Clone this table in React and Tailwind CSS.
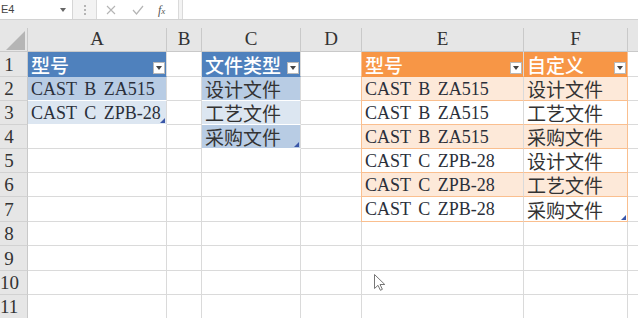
import React from 'react';

const CJK = "font-['Noto_Sans_CJK_SC','Noto_Sans',sans-serif]";
const SERIF = "font-['Liberation_Serif','Noto_Sans_CJK_SC',serif]";

// column widths include the right gridline
const COLS = [
  { key: 'A', w: 139 },
  { key: 'B', w: 35 },
  { key: 'C', w: 99 },
  { key: 'D', w: 61 },
  { key: 'E', w: 162 },
  { key: 'F', w: 104 },
  { key: 'G', w: 40 },
];

const ROW_H = [25, 24, 24, 24, 24, 24, 25, 24, 25, 24, 24];

// cell styles keyed by kind
const KIND = {
  blueHead: 'bg-[#4f81bd] text-white border-b-[#4f81bd]',
  blueDark: 'bg-[#b8cce4] border-b-white',
  blueLight: 'bg-[#dce6f1] border-b-white',
  orangeHead: 'bg-[#f79646] text-white border-b-[#f79646]',
  orangeBand: 'bg-[#fde9d9] border-b-[#fabf8f]',
  orangePlain: 'bg-white border-b-[#fabf8f]',
};

const ROWS = {
  1: {
    A: { t: '型号', k: 'blueHead', filter: true },
    C: { t: '文件类型', k: 'blueHead', filter: true },
    E: { t: '型号', k: 'orangeHead', filter: true, edgeL: true },
    F: { t: '自定义', k: 'orangeHead', filter: true, edgeR: true },
  },
  2: {
    A: { t: 'CAST B ZA515', k: 'blueDark' },
    C: { t: '设计文件', k: 'blueDark' },
    E: { t: 'CAST B ZA515', k: 'orangeBand', edgeL: true },
    F: { t: '设计文件', k: 'orangeBand', edgeR: true },
  },
  3: {
    A: { t: 'CAST C ZPB-28', k: 'blueLight', handle: true },
    C: { t: '工艺文件', k: 'blueLight' },
    E: { t: 'CAST B ZA515', k: 'orangePlain', edgeL: true },
    F: { t: '工艺文件', k: 'orangePlain', edgeR: true },
  },
  4: {
    C: { t: '采购文件', k: 'blueDark', handle: true },
    E: { t: 'CAST B ZA515', k: 'orangeBand', edgeL: true },
    F: { t: '采购文件', k: 'orangeBand', edgeR: true },
  },
  5: {
    E: { t: 'CAST C ZPB-28', k: 'orangePlain', edgeL: true },
    F: { t: '设计文件', k: 'orangePlain', edgeR: true },
  },
  6: {
    E: { t: 'CAST C ZPB-28', k: 'orangeBand', edgeL: true },
    F: { t: '工艺文件', k: 'orangeBand', edgeR: true },
  },
  7: {
    E: { t: 'CAST C ZPB-28', k: 'orangePlain', edgeL: true, last: true },
    F: { t: '采购文件', k: 'orangePlain', edgeR: true, last: true, handle: true },
  },
};

const isLatin = (s) => /^[\x00-\x7f]+$/.test(s);

const FilterButton = () => (
  <span className="absolute right-[1px] bottom-[2px] w-[12px] h-[12px] bg-white border border-[#b9b9b9] flex items-center justify-center">
    <svg width="6" height="4" viewBox="0 0 6 4">
      <path d="M0 0h6L3 4z" fill="#444" />
    </svg>
  </span>
);

const ResizeHandle = () => (
  <svg className="absolute right-[1px] bottom-[1px]" width="5" height="5" viewBox="0 0 5 5">
    <path d="M5 0v5H0z" fill="#3a56a8" />
  </svg>
);

const Cell = ({ w, cell }) => {
  const kind = cell ? KIND[cell.k] : 'border-b-[#dadada]';
  const text = cell?.t;
  const latin = text && isLatin(text);
  return (
    <div
      className={`relative shrink-0 h-full border-r border-b border-r-[#dadada] flex items-center pl-[3px] whitespace-nowrap overflow-visible ${kind} ${
        cell?.edgeL ? 'border-l border-l-[#fabf8f]' : ''
      } ${cell?.edgeR ? 'border-r-[#fabf8f]' : ''} ${cell?.last ? 'border-b-[#f7a96c]' : ''}`}
      style={{ width: cell?.edgeL ? w + 1 : w, marginLeft: cell?.edgeL ? -1 : 0 }}
    >
      {text && (
        <span
          className={
            latin
              ? `${SERIF} text-[18px] text-[#2a2f3a] [word-spacing:3px] leading-none`
              : `${CJK} text-[19px] leading-none ${cell.k.endsWith('Head') ? 'font-medium' : 'text-[#333]'}`
          }
        >
          {text}
        </span>
      )}
      {cell?.filter && <FilterButton />}
      {cell?.handle && <ResizeHandle />}
    </div>
  );
};

const FormulaBar = () => (
  <div className="h-[20px] flex items-stretch bg-[#f3f3f3] border-b border-[#d2d2d2]">
    <div className="w-[73px] bg-white border-r border-[#d6d6d6] flex items-center justify-between pl-[1px] pr-[6px]">
      <span className="font-['Liberation_Sans',sans-serif] text-[11px] text-[#444]">E4</span>
      <svg width="6" height="4" viewBox="0 0 6 4">
        <path d="M0 0h6L3 4z" fill="#666" />
      </svg>
    </div>
    <div className="w-[23px] flex flex-col items-center justify-center gap-[2px]">
      <span className="w-[2px] h-[2px] bg-[#b5b5b5]" />
      <span className="w-[2px] h-[2px] bg-[#b5b5b5]" />
      <span className="w-[2px] h-[2px] bg-[#b5b5b5]" />
    </div>
    <div className="w-[83px] bg-white border-x border-[#dadada] flex items-center">
      <svg className="ml-[9px]" width="10" height="10" viewBox="0 0 10 10">
        <path d="M1 1l8 8M9 1L1 9" stroke="#b5b5b5" strokeWidth="1.1" />
      </svg>
      <svg className="ml-[16px]" width="12" height="10" viewBox="0 0 12 10">
        <path d="M1 5l3.5 4L11 1" stroke="#b5b5b5" strokeWidth="1.2" fill="none" />
      </svg>
      <span className="ml-[14px] font-['Liberation_Serif',serif] italic text-[12px] text-[#555]">
        f<span className="text-[9px]">x</span>
      </span>
    </div>
    <div className="w-[3px]" />
    <div className="flex-1 bg-white border-l border-[#dadada]" />
  </div>
);

const HeaderRow = () => (
  <div className="h-[24px] flex bg-[#e6e6e6] border-b border-[#c9c9c9]">
    <div className="w-[28px] shrink-0 h-full border-r border-[#c9c9c9] relative">
      <svg className="absolute left-[6px] top-[3px]" width="19" height="19" viewBox="0 0 19 19">
        <path d="M19 0v19H0z" fill="#b5b5b5" />
      </svg>
    </div>
    {COLS.map((c) => (
      <div
        key={c.key}
        className={`shrink-0 h-full border-r border-[#c9c9c9] flex items-center justify-center ${SERIF} text-[19px] text-[#333]`}
        style={{ width: c.w }}
      >
        {c.key !== 'G' && c.key}
      </div>
    ))}
  </div>
);

const Cursor = () => (
  <svg className="absolute left-[374px] top-[274px]" width="12" height="17" viewBox="0 0 12 17">
    <path d="M0.5 0.5v14l3.5-3.2 2.4 5 2-1-2.4-4.8h4.8z" fill="#fff" stroke="#777" strokeWidth="1" strokeLinejoin="round" />
  </svg>
);

export default function App() {
  return (
    <div className="relative w-[638px] h-[318px] overflow-hidden bg-white">
      <FormulaBar />
      <div className="h-[8px] bg-[#e6e6e6]" />
      <HeaderRow />
      {ROW_H.map((h, i) => {
        const n = i + 1;
        const row = ROWS[n] || {};
        return (
          <div key={n} className="flex" style={{ height: h }}>
            <div className="w-[28px] shrink-0 h-full bg-[#e6e6e6] border-r border-b border-r-[#c9c9c9] border-b-[#d2d2d2] flex items-center">
              <span className={`w-[18px] text-center ${SERIF} text-[19px] leading-none text-[#333]`}>{n}</span>
            </div>
            {COLS.map((c) => (
              <Cell key={c.key} w={c.w} cell={row[c.key]} />
            ))}
          </div>
        );
      })}
      <Cursor />
    </div>
  );
}
